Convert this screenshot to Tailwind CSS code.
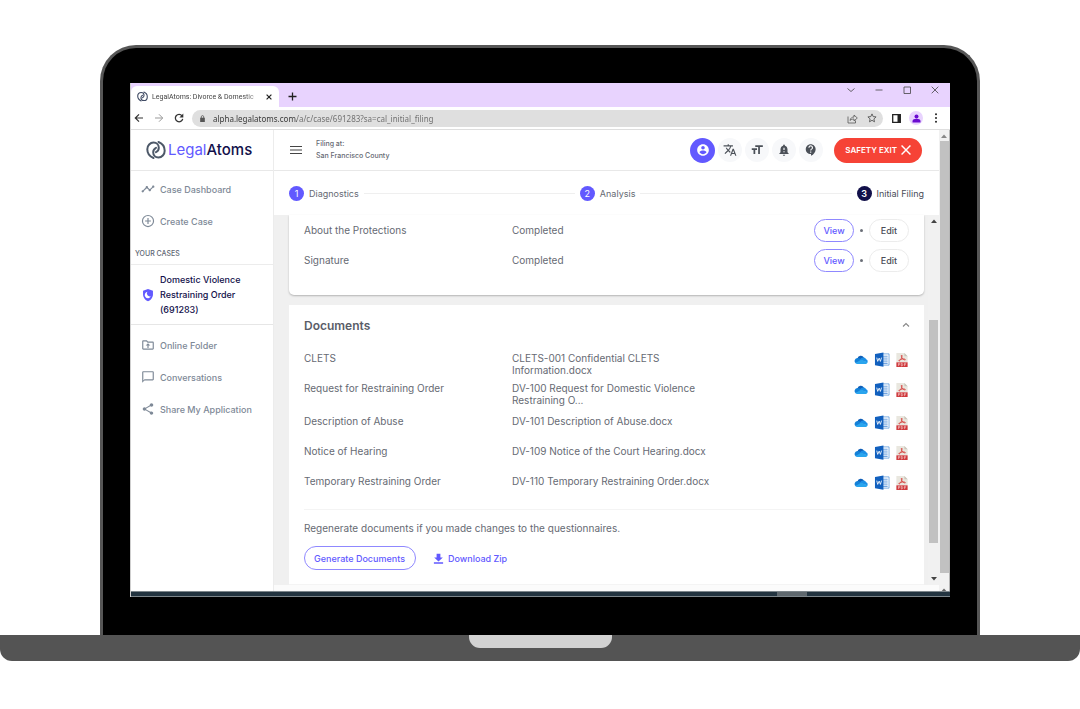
<!DOCTYPE html>
<html lang="en">
<head>
<meta charset="utf-8">
<meta name="viewport" content="width=device-width, initial-scale=1">
<title>LegalAtoms: Divorce &amp; Domestic Violence</title>
<script src="https://cdn.jsdelivr.net/npm/@tailwindcss/browser@4"></script>
</head>
<body class="bg-white font-['Inter',sans-serif] text-[10px] leading-[13px] text-[#666a73]">
<svg class="hidden" aria-hidden="true">
  <symbol id="logo" viewBox="0 0 20 20"><g fill="none" stroke="currentColor" stroke-width="2" stroke-linecap="round"><path d="M7.500 18C3.800 16.500 1.300 13.200 1.300 9.300c0-3.900 2.900-6.700 6.200-6.700 3.400 0 5.300 2.400 5.300 5.200 0 2.200-1.200 3.600-2.800 4.400"/><path d="M12.500 2c3.700 1.500 6.200 4.800 6.200 8.700 0 3.900-2.900 6.700-6.200 6.700-3.400 0-5.300-2.400-5.300-5.200 0-2.200 1.200-3.600 2.800-4.400"/></g></symbol>
  <symbol id="cloud" viewBox="0 0 24 16"><path fill="#0f5fb8" d="M6 6a6 6 0 0 1 11-1.500L14 10 5 8z"/><path fill="#1380d8" d="M5.500 5.500c2-.5 3.500.2 5 1.200L15 10 3 14.500A5 5 0 0 1 5.500 5.500z"/><path fill="#1c8fe6" d="M10 8.500c2-3.500 4-4.500 7-4 2 .3 3 1.500 3.300 2.500A4.600 4.600 0 0 1 23 13z"/><path fill="#2aa5ee" d="M2.500 14 12 8.300 23.300 12.500c-.5 2-2 3-4 3H5.500c-1.300 0-2.300-.5-3-1.500z"/></symbol>
  <symbol id="word" viewBox="0 0 16 16"><path fill="#fff" stroke="#3f86d6" stroke-width=".7" d="M8 2h7.500v12H8z"/><path stroke="#3f86d6" d="M9 4.500h5M9 6.500h5M9 8.500h5M9 10.500h5M9 12.300h5" stroke-width=".8"/><path fill="#1260be" d="M.5 2 9.500.4v15.200L.5 14z"/><path fill="none" stroke="#fff" stroke-width=".9" d="m2.400 6 1 4L5 6.500 6.300 10l1.200-4"/></symbol>
  <symbol id="pdf" viewBox="0 0 12 16"><path fill="#e9e7df" d="M0 1h8.500L12 4.500V11H0z"/><path fill="#c9c6ba" d="M8.500 1 12 4.500H8.500z"/><path fill="none" stroke="#d6403c" stroke-width=".9" d="M5.500 3.200c1.200.3.200 3-.6 4.400C4 9.200 3 10 2.600 9.300c0-.9 3-2 5-1.900 1.500 0 2.400.7 1.800 1.100C8 8.800 5.500 6.500 5.300 4.500c0-.6 0-1 .2-1.300z"/><path fill="#cf3a3d" d="M0 11h12v5H0z"/><path fill="none" stroke="#fff" stroke-opacity=".8" stroke-width=".6" d="M2.200 15v-3h.9c1.100 0 1.100 1.600 0 1.600h-.9M5.300 12v3c2 .2 2-3.200 0-3zM8.700 15v-3h1.700M8.700 13.500h1.400"/></symbol>
  <symbol id="help" viewBox="0 0 24 24"><path d="M11.500 2C6.810 2 3 5.810 3 10.500S6.810 19 11.500 19h.5v3c4.860-2.340 8-7 8-11.500C20 5.810 16.190 2 11.500 2zm1 14.500h-2v-2h2v2zm0-3.500h-2c0-3.250 3-3 3-5 0-1.100-.9-2-2-2s-2 .9-2 2h-2c0-2.210 1.790-4 4-4s4 1.790 4 4c0 2.500-3 2.750-3 5z"/></symbol>
</svg>

<div class="pt-[45px]">
  <!-- Laptop lid -->
  <div class="mx-[100px] rounded-t-[36px] border-[3px] border-b-0 border-[#565656] bg-black px-[27px] pt-[35px] pb-[38px]">
    <div class="border-l border-[#cfcfcf] bg-white">

      <!-- Tab strip -->
      <div class="flex h-6 items-end bg-[#e8d3fe]">
        <div class="flex h-[21px] w-[148px] items-center gap-1 rounded-t-md bg-white pl-[6px] pr-1">
          <svg class="size-[11px] shrink-0 text-[#3f4a63]"><use href="#logo"/></svg>
          <span class="flex-1 whitespace-nowrap bg-[linear-gradient(90deg,#3a3a3a_85%,#bbb)] bg-clip-text font-['Roboto',sans-serif] text-[7px] leading-[12px] text-transparent">LegalAtoms: Divorce &amp; Domestic</span>
          <button aria-label="Close tab" class="px-[3px]"><svg class="size-[6px]" viewBox="0 0 6 6" stroke="#222" stroke-width="1.200"><path d="m.6.600 4.800 4.800M5.400.600.600 5.400"/></svg></button>
        </div>
        <button aria-label="New tab" class="ml-[9px] mb-[6px]"><svg class="size-[9px]" viewBox="0 0 9 9" stroke="#222" stroke-width="1.300"><path d="M4.500.500v8M.500 4.500h8"/></svg></button>
        <div class="mb-[13px] ml-auto mr-[11px] flex items-center gap-5 text-[#444]">
          <button aria-label="Search tabs"><svg class="size-2" viewBox="0 0 8 8" fill="none" stroke="currentColor" stroke-width=".8"><path d="m.500 2.500 3.500 3 3.500-3"/></svg></button>
          <button aria-label="Minimize"><svg class="size-2" viewBox="0 0 8 8" stroke="currentColor" stroke-width=".8"><path d="M.500 4h7"/></svg></button>
          <button aria-label="Maximize"><svg class="size-2" viewBox="0 0 8 8" fill="none" stroke="currentColor" stroke-width=".8"><path d="M1 1h6.500v6.500H1z"/></svg></button>
          <button aria-label="Close"><svg class="size-2" viewBox="0 0 8 8" stroke="currentColor" stroke-width=".8"><path d="m.700.700 6.600 6.600M7.300.700.700 7.300"/></svg></button>
        </div>
      </div>

      <!-- Address bar -->
      <div class="flex h-[23px] items-center border-b border-[#dedede] bg-white pl-[3px] pr-3">
        <div class="flex items-center gap-[10px] text-[#333]">
          <button aria-label="Back"><svg class="size-[10px]" viewBox="0 0 10 10" fill="none" stroke="currentColor" stroke-width="1.200"><path d="M9 5H1.500M5 1.300 1.300 5 5 8.700"/></svg></button>
          <button aria-label="Forward" class="text-[#999]"><svg class="size-[10px]" viewBox="0 0 10 10" fill="none" stroke="currentColor"><path d="M1 5h7.500M5 1.300 8.700 5 5 8.700"/></svg></button>
          <button aria-label="Reload"><svg class="size-[10px]" viewBox="0 0 10 10" fill="none" stroke="currentColor" stroke-width="1.300"><path d="M8 2.800A3.700 3.700 0 1 0 8.700 5.800"/><path fill="currentColor" stroke="none" d="M9.300.600v3.900H5.400z"/></svg></button>
        </div>
        <div class="ml-[8px] flex h-[17px] flex-1 items-center rounded-full bg-[#dfdfdf] pl-[7px] pr-[6px]">
          <svg class="mr-[7px] size-[7px]" viewBox="0 0 7 9"><path fill="#555" d="M.500 3.500h6V9h-6z"/><path fill="none" stroke="#555" d="M2 4V2.300a1.500 1.500 0 0 1 3 0V4"/></svg>
          <input aria-label="Address" value="alpha.legalatoms.com/a/c/case/691283?sa=cal_initial_filing" class="min-w-0 flex-1 bg-[linear-gradient(90deg,#333_84px,#6b6b6b_84px)] bg-clip-text font-['Noto_Sans',sans-serif] text-[8px] leading-[13px] text-transparent outline-none">
          <button aria-label="Share page" class="mr-[9px]"><svg class="size-[11px]" viewBox="0 0 11 11" fill="none" stroke="#555" stroke-width=".8"><path d="M1 3.500v6.500h7.500V7.500M3 7.500C3.500 5 5 4 7 4V2l3.300 3L7 8V6C5.300 6 4 6.500 3 7.500z"/></svg></button>
          <button aria-label="Bookmark"><svg class="size-[10px]" viewBox="0 0 10 10" fill="none" stroke="#555" stroke-width=".9"><path d="m5 .900 1.200 2.700 2.900.3-2.200 2 .6 2.900L5 7.300 2.500 8.800l.6-2.900-2.200-2 2.900-.3z"/></svg></button>
        </div>
        <button aria-label="Side panel" class="ml-[9px]"><svg class="size-[9px]" viewBox="0 0 9 9"><path fill="none" stroke="#222" stroke-width="1.300" d="M.700.700h7.600v7.600H.700z"/><path fill="#222" d="M5.500.500h3v8h-3z"/></svg></button>
        <button aria-label="Profile" class="ml-2 flex size-[14px] items-center justify-center rounded-full bg-[#e8d3fe]"><svg class="size-[9px]" viewBox="0 0 9 9" fill="#6a0bd0"><circle cx="4.500" cy="2.500" r="2"/><path d="M.500 8.500V7c0-3 8-3 8 0v1.500z"/></svg></button>
        <button aria-label="Menu" class="ml-[11px]"><svg class="h-[10px] w-[4px]" viewBox="0 0 4 10" fill="#222"><circle cx="2" cy="1.300" r="1"/><circle cx="2" cy="5" r="1"/><circle cx="2" cy="8.700" r="1"/></svg></button>
      </div>

      <!-- Application -->
      <div class="flex">
        <aside class="w-[143px] shrink-0 border-r border-[#ececec] bg-white text-[9px] font-medium text-[#7e8997]">
          <a href="#" class="flex h-[41px] items-center gap-[2px] border-b border-[#e8e8e8] pl-[15px] text-[15px] font-normal leading-5 text-[#6259ff]">
            <svg class="size-5 text-[#4d5868]"><use href="#logo"/></svg>
            <span>Legal<span class="font-medium text-[#12104a]">Atoms</span></span>
          </a>
          <nav>
            <div class="pt-[2px]">
              <a href="#" class="flex h-8 items-center gap-[5px] pl-[10px]"><svg class="size-[14px]" viewBox="0 0 24 24" fill="currentColor"><path d="M23 8c0 1.100-.9 2-2 2-.18 0-.35-.02-.51-.07l-3.560 3.550c.05.16.07.34.07.52 0 1.100-.9 2-2 2s-2-.9-2-2c0-.18.02-.36.07-.52l-2.550-2.550c-.16.05-.34.07-.52.07s-.36-.02-.52-.07l-4.550 4.560c.05.16.07.33.07.51 0 1.100-.9 2-2 2s-2-.9-2-2 .9-2 2-2c.18 0 .35.02.51.07l4.560-4.550C8.020 9.360 8 9.180 8 9c0-1.100.9-2 2-2s2 .9 2 2c0 .18-.02.36-.07.52l2.550 2.550c.16-.05.34-.07.52-.07s.36.02.52.07l3.550-3.560C19.020 8.350 19 8.180 19 8c0-1.100.9-2 2-2s2 .9 2 2z"/></svg>Case Dashboard</a>
              <a href="#" class="flex h-8 items-center gap-[5px] pl-[10px]"><svg class="size-[14px]" viewBox="0 0 24 24" fill="none" stroke="currentColor" stroke-width="2"><circle cx="12" cy="12" r="9.500"/><path d="M12 7v10M7 12h10"/></svg>Create Case</a>
            </div>
            <h2 class="flex h-7 items-center border-b border-[#ececec] pl-1 pt-[6px] text-[7px] text-[#5d6673]">YOUR CASES</h2>
            <a href="#" class="flex items-center gap-[5px] border-b border-[#e6e6e6] py-[7px] pl-[10px] leading-[15px] text-[#12104a]"><svg class="size-[14px] shrink-0" viewBox="0 0 24 24"><path fill="#6259ff" d="M12 1.500 3.500 4.700v6c0 5.500 3.600 10.300 8.500 11.800 4.900-1.500 8.500-6.300 8.500-11.800v-6z"/><path fill="#fff" d="M11 6.500a5.500 5.500 0 1 0 6 7.500 5 5 0 0 1-6-7.500z"/></svg><span>Domestic Violence<br>Restraining Order<br>(691283)</span></a>
            <div class="pt-1">
              <a href="#" class="flex h-8 items-center gap-[5px] pl-[10px]"><svg class="size-[14px]" viewBox="0 0 24 24" fill="currentColor"><path d="M20 6h-8l-2-2H4c-1.100 0-2 .9-2 2v12c0 1.100.9 2 2 2h16c1.100 0 2-.9 2-2V8c0-1.100-.9-2-2-2zm0 12H4V6h5.170l2 2H20v10zM8 13h3v4h2v-4h3l-4-4z"/></svg>Online Folder</a>
              <a href="#" class="flex h-8 items-center gap-[5px] pl-[10px]"><svg class="size-[14px]" viewBox="0 0 24 24" fill="currentColor"><path d="M20 2H4c-1.100 0-2 .9-2 2v18l4-4h14c1.100 0 2-.9 2-2V4c0-1.100-.9-2-2-2zm0 14H6l-2 2V4h16v12z"/></svg>Conversations</a>
              <a href="#" class="flex h-8 items-center gap-[5px] pl-[10px]"><svg class="size-[14px]" viewBox="0 0 24 24" fill="currentColor"><path d="M18 16.080c-.76 0-1.440.3-1.960.77L8.910 12.700c.05-.23.09-.46.09-.7s-.04-.47-.09-.7l7.050-4.110c.54.5 1.250.81 2.040.81 1.660 0 3-1.340 3-3s-1.340-3-3-3-3 1.340-3 3c0 .24.04.47.09.7L8.040 9.810C7.500 9.310 6.790 9 6 9c-1.660 0-3 1.340-3 3s1.340 3 3 3c.79 0 1.500-.31 2.040-.81l7.120 4.160c-.05.21-.08.43-.08.65 0 1.610 1.310 2.920 2.920 2.920s2.920-1.310 2.920-2.920-1.310-2.920-2.920-2.920z"/></svg>Share My Application</a>
            </div>
          </nav>
        </aside>

        <div class="flex min-w-0 flex-1 flex-col">
          <header class="flex h-[41px] items-center border-b border-[#e8e8e8] pl-4 pr-[17px]">
            <button aria-label="Toggle menu"><svg class="size-3" viewBox="0 0 12 12" stroke="#444" stroke-width="1.200"><path d="M0 2.500h12M0 6h12M0 9.500h12"/></svg></button>
            <p class="ml-[14px] text-[7px] font-medium leading-[12px]">Filing at:<br>San Francisco County</p>
            <div class="ml-auto flex items-center gap-[3px] text-[#4b5058]">
              <button aria-label="Account" class="flex size-[25px] items-center justify-center rounded-full bg-[#6259ff] text-white"><svg class="size-[14px]" viewBox="0 0 24 24" fill="currentColor"><path d="M12 2C6.480 2 2 6.480 2 12s4.480 10 10 10 10-4.480 10-10S17.520 2 12 2zm0 3c1.660 0 3 1.340 3 3s-1.340 3-3 3-3-1.340-3-3 1.340-3 3-3zm0 14.200c-2.500 0-4.710-1.280-6-3.220.03-1.990 4-3.080 6-3.080 1.990 0 5.970 1.090 6 3.080-1.290 1.940-3.500 3.220-6 3.220z"/></svg></button>
              <button aria-label="Language" class="flex size-6 items-center justify-center rounded-full bg-[#f7f8fa]"><svg class="size-[14px]" viewBox="0 0 24 24" fill="currentColor"><path d="M12.870 15.070l-2.540-2.510.03-.03c1.740-1.940 2.980-4.170 3.710-6.530H17V4h-7V2H8v2H1v1.990h11.170C11.500 7.920 10.440 9.750 9 11.350 8.070 10.320 7.300 9.190 6.690 8h-2c.73 1.630 1.730 3.170 2.980 4.560l-5.090 5.020L4 19l5-5 3.110 3.110.76-2.040zM18.500 10h-2L12 22h2l1.120-3h4.750L21 22h2l-4.500-12zm-2.620 7l1.620-4.330L19.120 17h-3.240z"/></svg></button>
              <button aria-label="Text size" class="flex size-6 items-center justify-center rounded-full bg-[#f7f8fa]"><svg class="size-[14px]" viewBox="0 0 24 24" fill="currentColor"><path d="M22 4v3h-5v12h-3V7H9V4h13zM3 9h9v3H9v7H6v-7H3V9z"/></svg></button>
              <button aria-label="Notifications" class="flex size-6 items-center justify-center rounded-full bg-[#f7f8fa]"><svg class="size-[14px]" viewBox="0 0 24 24" fill="currentColor"><path d="M18 16v-5c0-3.070-1.640-5.640-4.500-6.320V4c0-.83-.67-1.500-1.500-1.500s-1.500.67-1.500 1.500v.68C7.630 5.360 6 7.920 6 11v5l-2 2v1h16v-1l-2-2zm-5 0h-2v-2h2v2zm0-4h-2V8h2v4zm-1 10c1.100 0 2-.9 2-2h-4c0 1.100.89 2 2 2z"/></svg></button>
              <button aria-label="Help" class="flex size-6 items-center justify-center rounded-full bg-[#f7f8fa]"><svg class="size-[14px]" fill="currentColor"><use href="#help"/></svg></button>
            </div>
            <button class="ml-[11px] flex h-[25px] items-center gap-1 rounded-full bg-[#f64336] px-[11px] text-[8px] font-semibold text-white">SAFETY EXIT<svg class="size-[10px]" viewBox="0 0 9 9" stroke="#fff" stroke-width="1.300"><path d="m.500.500 8 8M8.500.500l-8 8"/></svg></button>
          </header>

          <ol class="flex h-11 items-center gap-[5px] pl-[15px] pr-[15px] text-[9px]">
            <li class="flex items-center gap-[5px]"><span class="flex size-[15px] items-center justify-center rounded-full bg-[#6259ff] text-white">1</span>Diagnostics</li>
            <li aria-hidden="true" class="h-px flex-1 bg-[#efefef]"></li>
            <li class="flex items-center gap-[5px]"><span class="flex size-[15px] items-center justify-center rounded-full bg-[#6259ff] text-white">2</span>Analysis</li>
            <li aria-hidden="true" class="h-px flex-1 bg-[#efefef]"></li>
            <li class="flex items-center gap-[5px] text-[#4a4d57]"><span class="flex size-[15px] items-center justify-center rounded-full bg-[#12104a] font-semibold text-white">3</span>Initial Filing</li>
          </ol>

          <div class="flex flex-1 bg-[#f0f0f0]">
            <main class="flex min-w-0 flex-1 flex-col gap-[10px] pl-[15px] pr-1">
              <section class="rounded-b-[5px] bg-white pb-5 pl-[15px] pr-[15px] shadow-[0_1px_2px_rgba(0,0,0,0.25)]">
                <table class="w-full table-fixed text-left">
                  <tbody>
                    <tr class="h-[30px]"><th scope="row" class="w-[208px] font-normal">About the Protections</th><td>Completed</td>
                      <td class="w-[110px]"><div class="flex items-center justify-end gap-[6px] text-[9px] font-medium"><button class="h-[23px] w-10 rounded-full border border-[#8f88ff] text-[#6259ff]">View</button><span class="size-[3px] rounded-full bg-[#6b6f78]"></span><button class="h-[23px] w-10 rounded-full border border-[#ececec] text-[#4a4d57]">Edit</button></div></td></tr>
                    <tr class="h-[30px]"><th scope="row" class="font-normal">Signature</th><td>Completed</td>
                      <td><div class="flex items-center justify-end gap-[6px] text-[9px] font-medium"><button class="h-[23px] w-10 rounded-full border border-[#8f88ff] text-[#6259ff]">View</button><span class="size-[3px] rounded-full bg-[#6b6f78]"></span><button class="h-[23px] w-10 rounded-full border border-[#ececec] text-[#4a4d57]">Edit</button></div></td></tr>
                  </tbody>
                </table>
              </section>

              <section class="flex-1 border-b border-[#f4f4f4] bg-white pb-[14px] pl-[15px] pr-[14px]">
                <div class="flex h-10 items-center justify-between">
                  <h1 class="text-[12px] font-semibold text-[#5a5d68]">Documents</h1>
                  <button aria-label="Collapse documents"><svg class="size-2" viewBox="0 0 8 8" fill="none" stroke="#888" stroke-width="1.100"><path d="m1 5.500 3-3 3 3"/></svg></button>
                </div>
                <table class="mt-[7px] w-full table-fixed text-left align-top">
                  <tbody class="[&_td]:align-top [&_th]:align-top [&_th]:font-normal">
                    <tr class="h-[30px]"><th scope="row" class="w-[208px]">CLETS</th><td><p class="w-[190px] leading-[12px]">CLETS-001 Confidential CLETS Information.docx</p></td>
                      <td class="w-[60px]"><div class="flex items-center justify-end gap-[6px] pr-[2px]"><a href="#" aria-label="Open in OneDrive"><svg class="h-[15px] w-[14px]"><use href="#cloud"/></svg></a><a href="#" aria-label="Word"><svg class="h-[15px] w-4"><use href="#word"/></svg></a><a href="#" aria-label="PDF"><svg class="h-[15px] w-3"><use href="#pdf"/></svg></a></div></td></tr>
                    <tr class="h-[33px]"><th scope="row">Request for Restraining Order</th><td><p class="w-[190px] leading-[12px]">DV-100 Request for Domestic Violence Restraining O...</p></td>
                      <td><div class="flex items-center justify-end gap-[6px] pr-[2px]"><a href="#" aria-label="Open in OneDrive"><svg class="h-[15px] w-[14px]"><use href="#cloud"/></svg></a><a href="#" aria-label="Word"><svg class="h-[15px] w-4"><use href="#word"/></svg></a><a href="#" aria-label="PDF"><svg class="h-[15px] w-3"><use href="#pdf"/></svg></a></div></td></tr>
                    <tr class="h-[30px]"><th scope="row">Description of Abuse</th><td>DV-101 Description of Abuse.docx</td>
                      <td><div class="flex items-center justify-end gap-[6px] pr-[2px]"><a href="#" aria-label="Open in OneDrive"><svg class="h-[15px] w-[14px]"><use href="#cloud"/></svg></a><a href="#" aria-label="Word"><svg class="h-[15px] w-4"><use href="#word"/></svg></a><a href="#" aria-label="PDF"><svg class="h-[15px] w-3"><use href="#pdf"/></svg></a></div></td></tr>
                    <tr class="h-[30px]"><th scope="row">Notice of Hearing</th><td>DV-109 Notice of the Court Hearing.docx</td>
                      <td><div class="flex items-center justify-end gap-[6px] pr-[2px]"><a href="#" aria-label="Open in OneDrive"><svg class="h-[15px] w-[14px]"><use href="#cloud"/></svg></a><a href="#" aria-label="Word"><svg class="h-[15px] w-4"><use href="#word"/></svg></a><a href="#" aria-label="PDF"><svg class="h-[15px] w-3"><use href="#pdf"/></svg></a></div></td></tr>
                    <tr class="h-[34px]"><th scope="row">Temporary Restraining Order</th><td>DV-110 Temporary Restraining Order.docx</td>
                      <td><div class="flex items-center justify-end gap-[6px] pr-[2px]"><a href="#" aria-label="Open in OneDrive"><svg class="h-[15px] w-[14px]"><use href="#cloud"/></svg></a><a href="#" aria-label="Word"><svg class="h-[15px] w-4"><use href="#word"/></svg></a><a href="#" aria-label="PDF"><svg class="h-[15px] w-3"><use href="#pdf"/></svg></a></div></td></tr>
                  </tbody>
                </table>
                <p class="border-t border-[#f4f4f4] pt-[12px]">Regenerate documents if you made changes to the questionnaires.</p>
                <div class="mt-[11px] flex items-center gap-4 text-[9px] font-medium text-[#6259ff]">
                  <button class="h-6 rounded-full border border-[#8f88ff] pl-[9px] pr-[10px]">Generate Documents</button>
                  <a href="#" class="flex items-center gap-[3px]"><svg class="size-[13px]" viewBox="0 0 24 24" fill="currentColor"><path d="M20 10h-4.500V3h-7v7H4l8 7.500L20 10zM3.500 19v2.500h17V19h-17z"/></svg>Download Zip</a>
                </div>
              </section>
            </main>
            <!-- Pane scrollbar -->
            <div aria-hidden="true" class="flex w-[11px] flex-col items-center bg-[#f1f1f1] py-1">
              <svg class="h-[4px] w-[6px]" viewBox="0 0 6 4" fill="#444"><path d="m0 4 3-3.500L6 4z"/></svg>
              <div class="mt-[97px] w-[9px] flex-1 bg-[#c1c1c1]"></div>
              <svg class="mt-[34px] h-[4px] w-[6px]" viewBox="0 0 6 4" fill="#444"><path d="m0 0 3 3.500L6 0z"/></svg>
            </div>
          </div>
          <div class="h-[6px] bg-[#fbfbfb]"></div>
        </div>

        <!-- Window scrollbar -->
        <div aria-hidden="true" class="flex w-[11px] flex-col items-center border-r border-[#b5b5b5] bg-[#f1f1f1] pt-1">
          <svg class="h-[4px] w-[6px]" viewBox="0 0 6 4" fill="#888"><path d="m0 4 3-3.500L6 4z"/></svg>
          <div class="mt-[3px] w-[9px] flex-1 bg-[#c1c1c1]"></div>
          <svg class="mt-[15px] h-[3px] w-[6px]" viewBox="0 0 6 4" fill="#666"><path d="m0 4 3-3.500L6 4z"/></svg>
        </div>
      </div>

      <!-- Taskbar edge -->
      <div class="flex h-[6px] border-y border-[#7d868b] bg-[#233440]"><div class="ml-auto mr-[143px] w-[30px] bg-[#5f686e]"></div></div>
    </div>
  </div>

  <!-- Laptop base -->
  <div class="flex h-[26px] justify-center rounded-b-[12px] bg-[#545454]">
    <div class="h-[13px] w-[143px] rounded-b-[11px] bg-[#d2d2d2]"></div>
  </div>
</div>
</body>
</html>
